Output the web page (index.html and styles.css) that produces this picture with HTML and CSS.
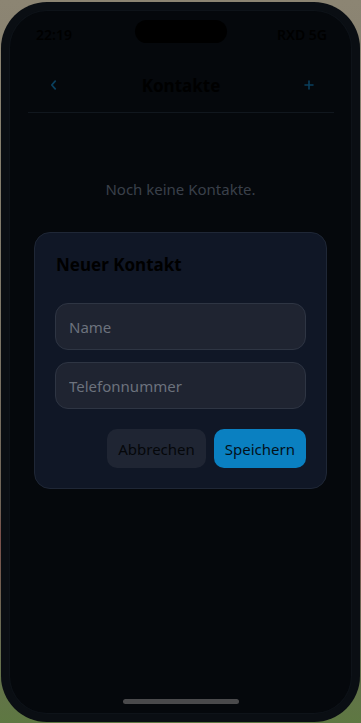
FILE: index.html
```html
<!DOCTYPE html>
<html lang="de">
<head>
    <meta charset="UTF-8">
    <meta name="viewport" content="width=device-width, initial-scale=1.0">
    <title>Kontakte</title>
    <link rel="stylesheet" href="styles.css">
</head>
<body>

    <!-- Phone frame -->
    <div class="phone">
        <div class="screen">
            <div class="island"></div>

            <!-- Status bar -->
            <div class="status-bar">
                <span>22:19</span>
                <span>RXD 5G</span>
            </div>

            <!-- Header -->
            <div class="header">
                <button class="icon-btn" aria-label="Zurück">
                    <svg width="7" height="10" viewBox="0 0 7 10">
                        <polyline points="5.2,1.2 1.8,5 5.2,8.8" fill="none" stroke="currentColor" stroke-width="1.8" stroke-linecap="round" stroke-linejoin="round"/>
                    </svg>
                </button>
                <h1>Kontakte</h1>
                <button class="icon-btn" aria-label="Neu">
                    <svg width="10" height="10" viewBox="0 0 10 10">
                        <path d="M5 1V9M1 5H9" stroke="currentColor" stroke-width="1.6" stroke-linecap="round"/>
                    </svg>
                </button>
            </div>

            <p class="empty">Noch keine Kontakte.</p>

            <div class="home-bar"></div>

            <!-- Dialog -->
            <div class="overlay">
                <div class="dialog">
                    <h3>Neuer Kontakt</h3>
                    <input type="text" placeholder="Name">
                    <input type="tel" placeholder="Telefonnummer">
                    <div class="actions">
                        <button class="btn btn-cancel">Abbrechen</button>
                        <button class="btn btn-save">Speichern</button>
                    </div>
                </div>
            </div>
        </div>
    </div>

</body>
</html>
```

FILE: styles.css
```css
/* Global Styles */
* {
    box-sizing: border-box;
}
body {
    margin: 0;
    padding: 0;
    width: 361px;
    height: 723px;
    overflow: hidden;
    font-family: "Noto Sans", "Open Sans", Arial, sans-serif;
    background: linear-gradient(180deg, #8c8573 0%, #7d7768 45%, #6f6457 70%, #7a4f4a 74%, #6b6a55 86%, #5e7842 100%);
}
.phone {
    width: 359px;
    height: 720px;
    margin: 2px 1px 1px;
    padding: 9px;
    border-radius: 46px;
    background-color: #0a0e13;
}
.screen {
    position: relative;
    height: 100%;
    border-radius: 37px;
    background-color: #05080c;
    box-shadow: 0 0 0 1px #0e1319;
    overflow: hidden;
}
.island {
    position: absolute;
    top: 9px;
    left: 125px;
    width: 92px;
    height: 23px;
    border-radius: 12px;
    background-color: #000;
}
.status-bar {
    height: 47px;
    padding: 0 24px 0 26px;
    display: flex;
    justify-content: space-between;
    align-items: center;
    font-size: 14px;
    font-weight: 600;
    color: #000;
}
.header {
    margin: 0 17px 0 18px;
    height: 55px;
    padding: 0 19px 0 19px;
    display: flex;
    justify-content: space-between;
    align-items: center;
    border-bottom: 1px solid #11171e;
}
.header h1 {
    margin: 0;
    font-size: 17px;
    font-weight: 700;
    color: #000;
}
.icon-btn {
    background: none;
    border: none;
    padding: 0;
    width: 12px;
    display: flex;
    justify-content: center;
    color: #0a3f5d;
}
.empty {
    margin: 66px 0 0;
    text-align: center;
    font-size: 15px;
    color: #3a404a;
}
.home-bar {
    position: absolute;
    bottom: 9px;
    left: 113px;
    width: 116px;
    height: 5px;
    border-radius: 3px;
    background-color: #4a4a4c;
}
.overlay {
    position: absolute;
    inset: 0;
    padding-bottom: 3px;
    display: flex;
    justify-content: center;
    align-items: center;
}
.dialog {
    width: 293px;
    padding: 20px;
    border-radius: 16px;
    background-color: #101726;
    border: 1px solid #1f2736;
    display: flex;
    flex-direction: column;
}
.dialog h3 {
    margin: 0 0 26px;
    padding-left: 1px;
    font-size: 17px;
    line-height: 24px;
    font-weight: 700;
    color: #000;
}
.dialog input {
    height: 47px;
    margin-bottom: 12px;
    padding: 0 13px;
    border-radius: 13px;
    border: 1px solid #2e3543;
    background-color: #1f2431;
    font-family: inherit;
    font-size: 15px;
    color: #c9cdd4;
    outline: none;
}
.dialog input::placeholder {
    color: #6c727d;
}
.actions {
    margin-top: 8px;
    display: flex;
    justify-content: flex-end;
    gap: 8px;
}
.btn {
    height: 39px;
    padding: 0 11px;
    border: none;
    border-radius: 10px;
    font-family: inherit;
    font-size: 15px;
    cursor: pointer;
}
.btn-cancel {
    background-color: #1f2533;
    color: #05070a;
}
.btn-save {
    background-color: #0a80c1;
    color: #03101a;
}
```
